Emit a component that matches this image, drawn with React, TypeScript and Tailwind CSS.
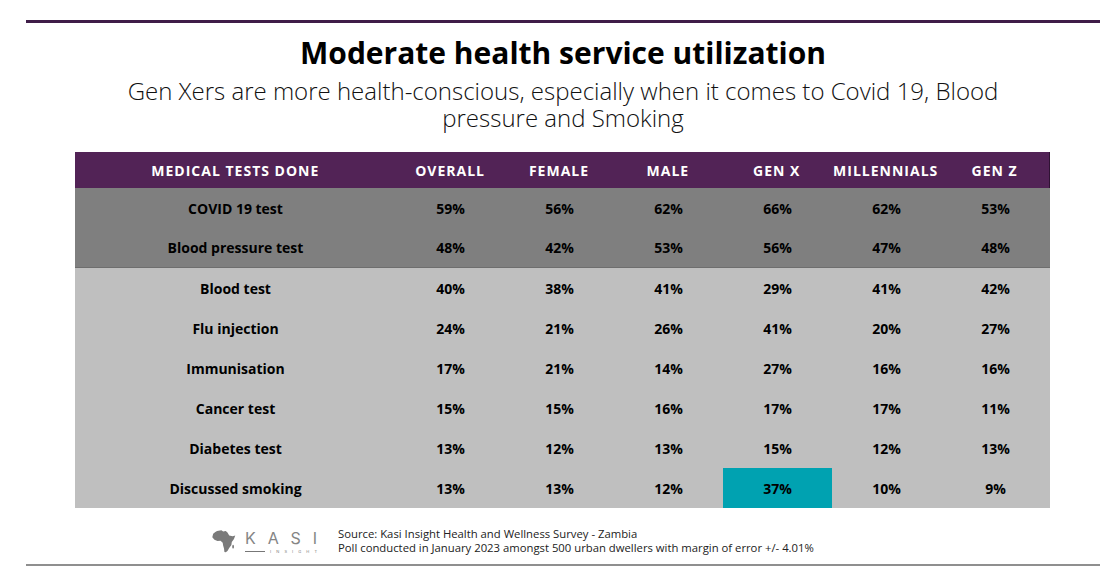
const cols = ["OVERALL", "FEMALE", "MALE", "GEN X", "MILLENNIALS", "GEN Z"];

const rows: { label: string; values: string[]; dark?: boolean }[] = [
  { label: "COVID 19 test", values: ["59%", "56%", "62%", "66%", "62%", "53%"], dark: true },
  { label: "Blood pressure test", values: ["48%", "42%", "53%", "56%", "47%", "48%"], dark: true },
  { label: "Blood test", values: ["40%", "38%", "41%", "29%", "41%", "42%"] },
  { label: "Flu injection", values: ["24%", "21%", "26%", "41%", "20%", "27%"] },
  { label: "Immunisation", values: ["17%", "21%", "14%", "27%", "16%", "16%"] },
  { label: "Cancer test", values: ["15%", "15%", "16%", "17%", "17%", "11%"] },
  { label: "Diabetes test", values: ["13%", "12%", "13%", "15%", "12%", "13%"] },
  { label: "Discussed smoking", values: ["13%", "13%", "12%", "37%", "10%", "9%"] },
];

function KasiLogo() {
  return (
    <div className="flex items-center gap-[8px]">
      <svg width="26" height="25" viewBox="0 0 30 28">
        <path
          d="M7 2 L12 1 L14 2.5 L17 2 L19 3.5 L21 7 L25 8 L28 7 L26.5 11 L24 14.5 L23.5 18 L21 21.5 L19 25 L17 26.5 L15.5 26 L15 22 L14 18.5 L13.5 15.5 L11 13 L7.5 13.5 L4 12 L1.5 9 L2.5 5 L5 3 Z"
          fill="#7a7a7a"
        />
        <ellipse cx="25.5" cy="20" rx="1" ry="2.2" fill="#7a7a7a" />
      </svg>
      <div className="flex flex-col w-[72px] mt-[2px]" style={{ fontFamily: "Inter, sans-serif" }}>
        <div className="flex justify-between text-[16px] leading-[14px] font-normal text-[#858585]">
          <span>K</span>
          <span>A</span>
          <span>S</span>
          <span>I</span>
        </div>
        <div className="mt-[4px] flex justify-between items-center text-[4px] leading-[5px] text-[#777]">
          <span className="w-[20px] h-[1px] bg-[#777]" />
          <span>I</span>
          <span>N</span>
          <span>S</span>
          <span>I</span>
          <span>G</span>
          <span>H</span>
          <span>T</span>
        </div>
      </div>
    </div>
  );
}

export default function App() {
  return (
    <div className="w-[1110px] h-[584px] bg-white pt-[20px]" style={{ fontFamily: "'Open Sans', sans-serif" }}>
      <div className="ml-[26px] w-[1074px]">
        <div className="h-[3px] bg-[#3f1d48]" />

        <h1 className="mt-[12px] text-center text-[30px] leading-[36px] font-bold text-black">
          Moderate health service utilization
        </h1>
        <p className="mt-[6px] mx-auto w-[910px] text-center text-[24px] leading-[27px] font-light text-[#111]">
          Gen Xers are more health-conscious, especially when it comes to Covid 19, Blood pressure and Smoking
        </p>

        <div className="mt-[21px] ml-[49px] w-[975px] text-[14px] font-bold">
          <div className="flex h-[36px] items-center bg-[#522356] text-white border-r border-[#2f1233] tracking-[1px]">
            <div className="w-[321px] text-center">MEDICAL TESTS DONE</div>
            {cols.map((c) => (
              <div key={c} className="w-[109px] text-center">
                {c}
              </div>
            ))}
          </div>
          {rows.map((r, i) => (
            <div
              key={r.label}
              className={`flex h-[40px] items-stretch text-black ${r.dark ? "bg-[#7f7f7f]" : "bg-[#bfbfbf]"} ${i === 1 ? "border-b border-[#6e6e6e]" : ""}`}
            >
              <div className="w-[321px] flex items-center justify-center">{r.label}</div>
              {r.values.map((v, j) => (
                <div
                  key={j}
                  className={`w-[109px] flex items-center justify-center ${r.label === "Discussed smoking" && j === 3 ? "bg-[#00a2b1]" : ""}`}
                >
                  {v}
                </div>
              ))}
            </div>
          ))}
        </div>

        <div className="mt-[19px] ml-[185px] flex items-center gap-[21px]">
          <KasiLogo />
          <div className="text-[11.3px] leading-[14px] text-[#222]">
            <div>Source: Kasi Insight Health and Wellness Survey - Zambia</div>
            <div>Poll conducted in January 2023 amongst 500 urban dwellers with margin of error +/- 4.01%</div>
          </div>
        </div>

        <div className="mt-[9px] h-[2px] bg-[#8f8f8f]" />
      </div>
    </div>
  );
}
